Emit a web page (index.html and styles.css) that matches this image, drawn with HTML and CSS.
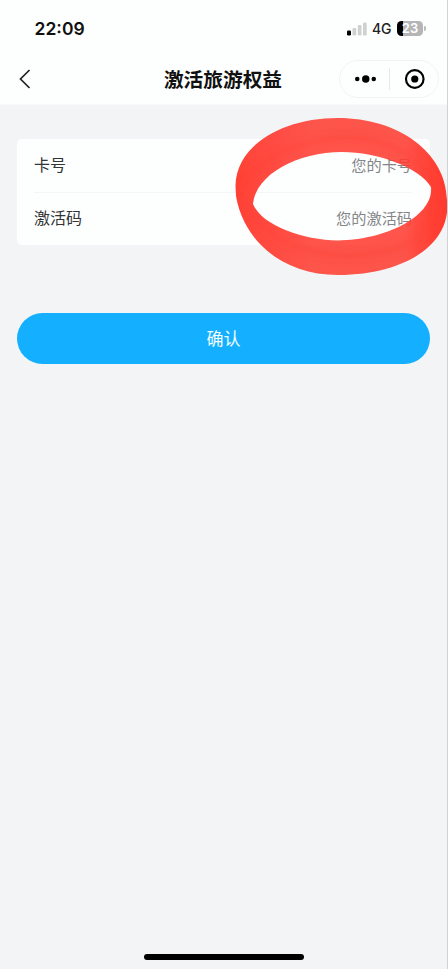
FILE: index.html
```html
<!DOCTYPE html>
<html lang="zh-CN">
<head>
<meta charset="utf-8">
<title>激活旅游权益</title>
<link rel="stylesheet" href="styles.css">
</head>
<body>
<div class="screen">
  <header class="header">
    <div class="status">
      <span class="time">22:09</span>
      <div class="indicators">
        <svg class="signal" width="20" height="14" viewBox="0 0 20 14">
          <rect x="0" y="8.5" width="4" height="5" rx="1.2" fill="#000"/>
          <rect x="5.5" y="6" width="3.7" height="7.5" rx="1.2" fill="#d0d0d1"/>
          <rect x="10.8" y="3" width="3.7" height="10.5" rx="1.2" fill="#d0d0d1"/>
          <rect x="16" y="0.5" width="3.7" height="13" rx="1.2" fill="#d0d0d1"/>
        </svg>
        <span class="network">4G</span>
        <span class="battery">23</span>
        <span class="battery-tip"></span>
      </div>
    </div>
    <div class="nav">
      <svg class="back" width="12" height="20" viewBox="0 0 12 20">
        <path d="M10.5 1 1.5 10l9 9" fill="none" stroke="#222" stroke-width="1.7"/>
      </svg>
      <h1 class="title">激活旅游权益</h1>
      <div class="capsule">
        <svg width="22" height="8" viewBox="0 0 22 8">
          <circle cx="2.3" cy="4" r="2.3"/><circle cx="11" cy="4" r="3.8"/><circle cx="19.2" cy="4" r="2.3"/>
        </svg>
        <span class="capsule-line"></span>
        <svg width="22" height="22" viewBox="0 0 22 22">
          <circle cx="11" cy="11" r="9" fill="none" stroke="#000" stroke-width="2.2"/><circle cx="11" cy="11" r="3.7"/>
        </svg>
      </div>
    </div>
  </header>
  <main class="main">
    <section class="card">
      <div class="row"><span>卡号</span><span class="placeholder">您的卡号</span></div>
      <div class="row"><span>激活码</span><span class="placeholder">您的激活码</span></div>
    </section>
    <button class="confirm">确认</button>
  </main>
  <div class="home"></div>
  <svg class="marker" width="228" height="180" viewBox="220 105 228 180">
    <defs>
      <linearGradient id="ink" x1="236" x2="447" y1="0" y2="0" gradientUnits="userSpaceOnUse">
        <stop offset="0" stop-color="#ff3b30" stop-opacity=".97"/>
        <stop offset=".1" stop-color="#ff3b30" stop-opacity=".93"/>
        <stop offset=".35" stop-color="#ff3b30" stop-opacity=".87"/>
        <stop offset=".8" stop-color="#ff3b30" stop-opacity=".87"/>
        <stop offset=".93" stop-color="#ff3b30" stop-opacity=".97"/>
        <stop offset="1" stop-color="#ff3b30"/>
      </linearGradient>
      <filter id="soft" x="-5%" y="-5%" width="110%" height="110%"><feGaussianBlur stdDeviation=".7"/></filter>
      <filter id="wash" x="-10%" y="-50%" width="120%" height="200%"><feGaussianBlur stdDeviation="3.5"/></filter>
      <path id="loop" d="M235.5 186C236 145 283 118 338 118C398 118 446 152 447 200C452 246 402 275 338 275C285 275 244 243 236 196ZM253 204C256 174 298 152 342 152C378 152 420 168 431 187C434 216 386 240 338 240.5C304 240 262 226 253 204Z"/>
      <clipPath id="ring"><use href="#loop" clip-rule="evenodd"/></clipPath>
    </defs>
    <use href="#loop" filter="url(#soft)" fill="url(#ink)" fill-rule="evenodd"/>
    <g clip-path="url(#ring)">
      <g filter="url(#wash)" fill="none" stroke="#ff3b30" stroke-opacity=".28" stroke-width="8">
        <path d="M244 190C254 157 300 140 345 138C388 138 421 155 438 190"/>
        <path d="M244 198C258 235 300 253 346 256C390 255 436 240 439 205"/>
      </g>
    </g>
  </svg>
</div>
</body>
</html>
```
FILE: styles.css
```css
* { box-sizing: border-box; }
body { margin: 0; font-family: "Liberation Sans", "Noto Sans CJK SC", sans-serif; }
.screen {
  position: relative;
  display: flex;
  flex-direction: column;
  width: 448px;
  height: 969px;
  overflow: hidden;
  background: #f3f4f6;
  border-right: 1px solid #d1d2d4;
}
.header { height: 105px; background: #fdfefe; border-bottom: 1px solid #f8f9fa; }
.status {
  display: flex;
  justify-content: space-between;
  align-items: center;
  height: 57px;
  padding: 0 21px 0 34.5px;
}
.time { font: 600 17.5px/20px Inter, sans-serif; color: #111; }
.indicators { display: flex; align-items: center; margin-right: .5px; }
.network { margin-left: 5px; width: 20px; font: 500 14px/16px Inter, sans-serif; letter-spacing: -.2px; color: #222; }
.battery {
  width: 26px;
  height: 15px;
  margin-left: 5px;
  border-radius: 4.5px;
  background: linear-gradient(90deg, #000 6px, #b5b5b7 6px);
  color: #fff;
  font: 600 13px/15px Inter, sans-serif;
  text-align: center;
}
.battery-tip { width: 1.5px; height: 5px; margin-left: 1px; border-radius: 0 2px 2px 0; background: #b9b9bb; }
.nav { display: grid; grid-template-columns: 145px 156px 1fr; align-items: center; height: 44px; }
.back { margin-left: 19px; }
.title { margin: 0; font: 700 19.7px/28px "Noto Sans CJK SC", sans-serif; color: #111; text-align: center; white-space: nowrap; }
.capsule {
  display: flex;
  align-items: center;
  width: 100px;
  height: 38px;
  margin-left: 38px;
  padding: 0 13px 0 15px;
  border: 1px solid #f2f3f4;
  border-radius: 19px;
}
.capsule-line { width: 1px; height: 22px; margin: 0 14px 0 12px; background: #e6e7e8; }
.main { padding: 34px 17px 0; }
.card { height: 106px; padding: 0 18px 0 17px; border-radius: 5px; background: #fdfefe; }
.row {
  display: flex;
  justify-content: space-between;
  align-items: center;
  height: 53px;
  padding-bottom: 3px;
  font: 400 16px/24px "Noto Sans CJK SC", sans-serif;
  color: #333436;
}
.row + .row { border-top: 1px solid #f4f5f6; padding-bottom: 4px; }
.placeholder { font-size: 15.2px; color: #85868a; }
.confirm {
  display: block;
  width: 100%;
  height: 51px;
  margin-top: 68px;
  padding: 0 0 2px;
  border: 0;
  border-radius: 26px;
  background: #14b0ff;
  color: #f2fbff;
  font: 400 17px/24px "Noto Sans CJK SC", sans-serif;
}
.home { width: 160px; height: 6px; margin: auto auto 9px 144px; border-radius: 3px; background: #000; }
.marker { position: absolute; top: 105px; left: 220px; }
```
